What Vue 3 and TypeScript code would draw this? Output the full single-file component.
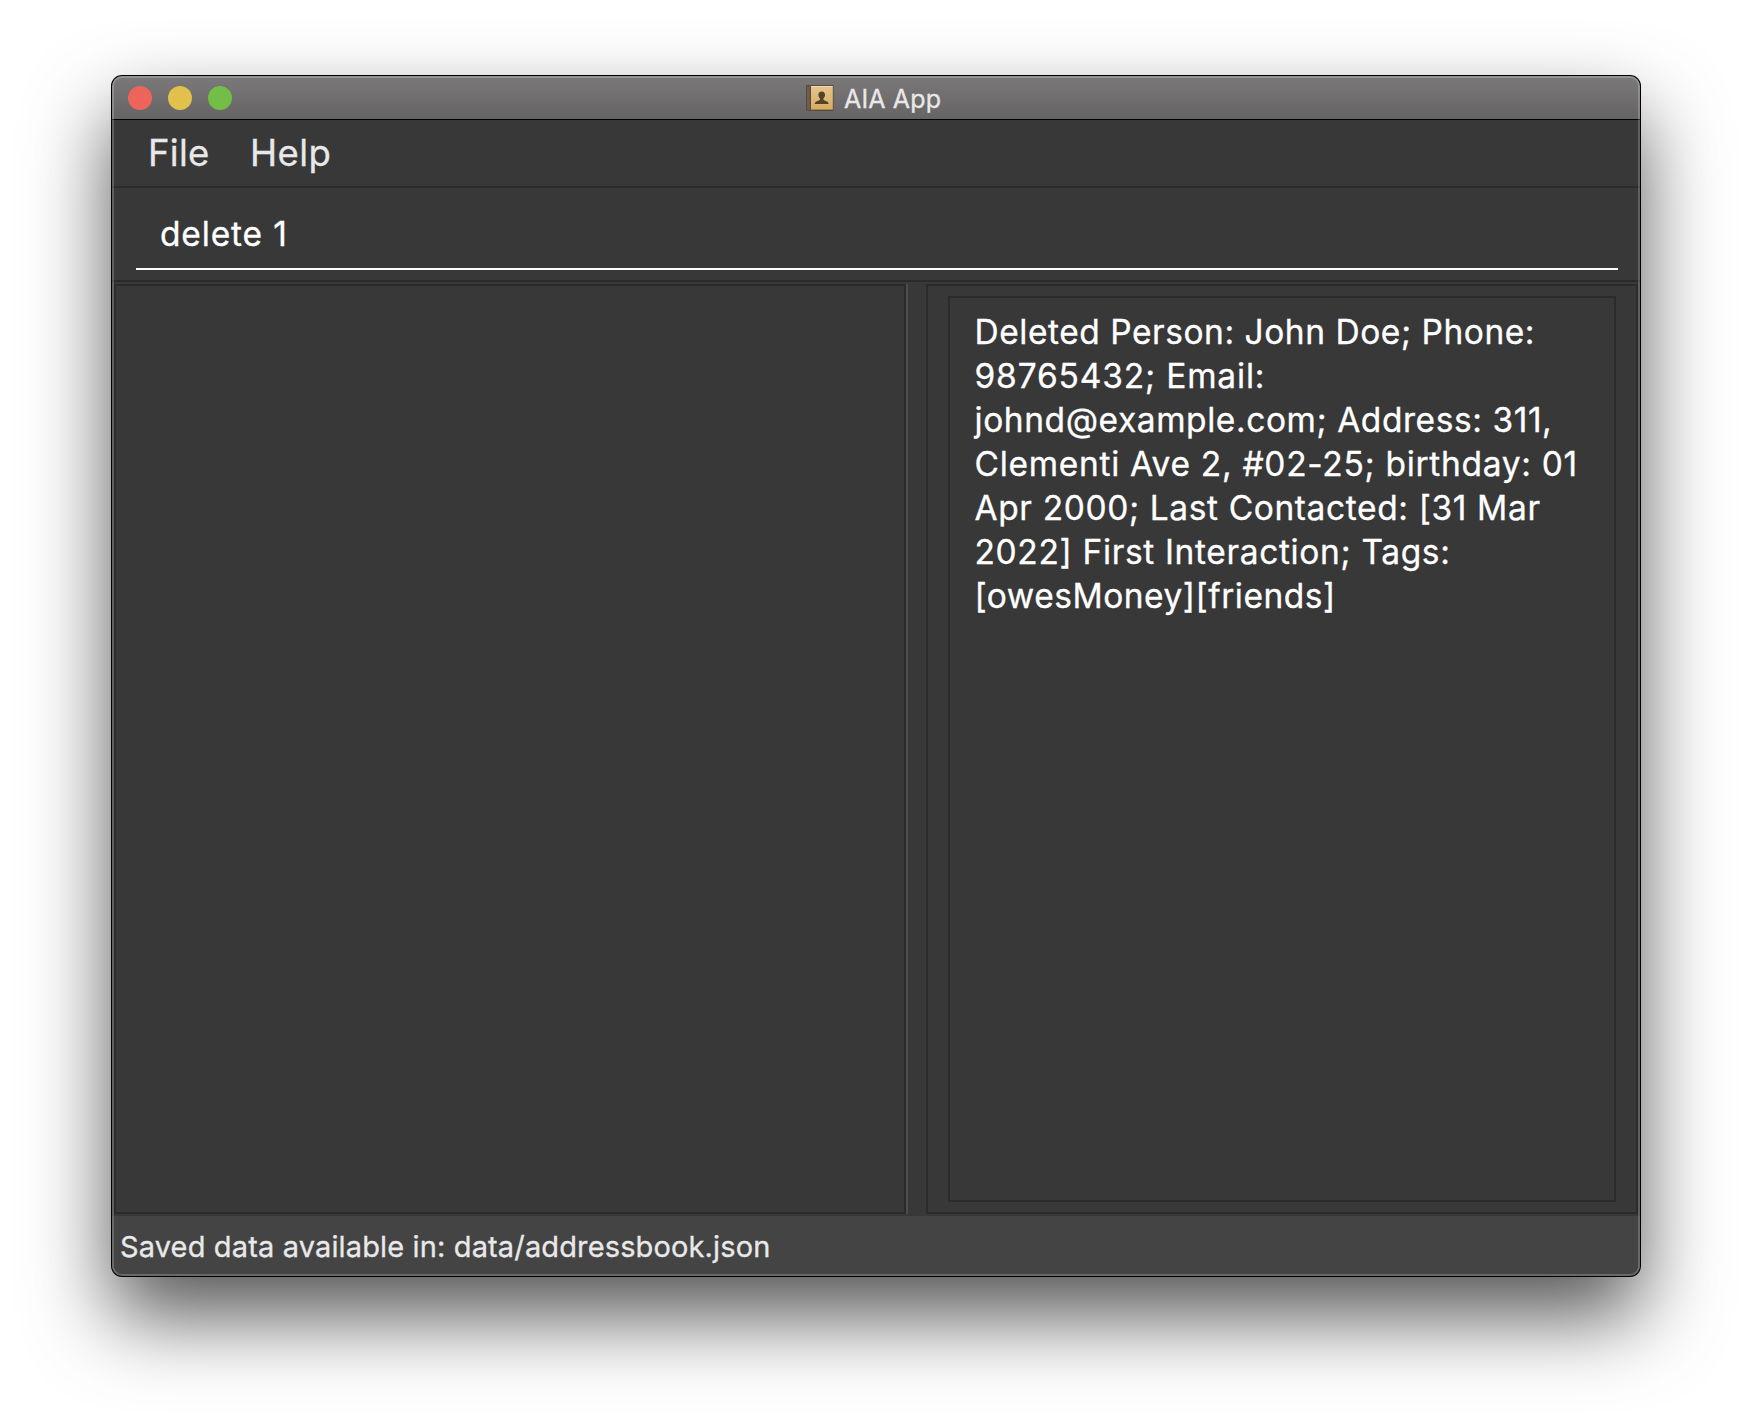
<script setup lang="ts">
interface Line {
  text: string
  spacing: number
}

const title = 'AIA App'
const command = 'delete 1'
const result: Line[] = [
  { text: 'Deleted Person: John Doe; Phone:', spacing: 0.54 },
  { text: '98765432; Email:', spacing: 0.83 },
  { text: 'johnd@example.com; Address: 311,', spacing: 0.57 },
  { text: 'Clementi Ave 2, #02-25; birthday: 01', spacing: 0.7 },
  { text: 'Apr 2000; Last Contacted: [31 Mar', spacing: 0.62 },
  { text: '2022] First Interaction; Tags:', spacing: 0.65 },
  { text: '[owesMoney][friends]', spacing: 0.51 },
]
const status = 'Saved data available in: data/addressbook.json'
</script>

<template>
  <main class="desktop">
    <section class="window">
      <header class="titlebar">
        <div class="lights">
          <i class="light close"></i>
          <i class="light minimise"></i>
          <i class="light zoom"></i>
        </div>
        <svg class="book" width="28" height="26" viewBox="0 0 28 26">
          <defs>
            <linearGradient id="cover" x1="0" y1="0" x2="0" y2="1">
              <stop offset="0" stop-color="#e6c58c" />
              <stop offset="1" stop-color="#d9ab62" />
            </linearGradient>
          </defs>
          <rect x="0" y="0" width="27.5" height="26" rx="1.2" fill="#5a4a3c" />
          <rect x="1" y="1" width="3" height="24" fill="#6d5b50" />
          <rect x="5" y="1" width="21.8" height="23.6" fill="url(#cover)" />
          <path d="M5 1.5H26.5" stroke="#f3deb4" stroke-width="1" />
          <path
            d="M15.7 6.4c-2.100 0-3.300 1.500-3.300 3.400 0 1.600.6 2.900 1.600 3.800.2 1.300-.3 1.700-1.700 2.200-2 .7-3.400 1.100-3.600 3.200h14c-.2-2.100-1.600-2.500-3.600-3.200-1.400-.5-1.900-.9-1.700-2.200 1-.9 1.600-2.200 1.600-3.800 0-1.900-1.200-3.400-3.300-3.400z"
            fill="#54432b"
          />
        </svg>
        <span class="title">{{ title }}</span>
      </header>

      <nav class="menu">
        <span class="file">File</span>
        <span class="help">Help</span>
      </nav>

      <div class="command">
        <div class="field">{{ command }}</div>
      </div>

      <div class="split">
        <div class="pane list"></div>
        <div class="divider"></div>
        <div class="pane detail">
          <div class="output">
            <div
              v-for="line in result"
              :key="line.text"
              class="line"
              :style="{ letterSpacing: line.spacing + 'px' }"
            >{{ line.text }}</div>
          </div>
        </div>
      </div>

      <footer class="status">{{ status }}</footer>
    </section>
  </main>
</template>

<style>
html,
body {
  background: #fff;
}
</style>

<style scoped>
.desktop {
  box-sizing: border-box;
  width: 1752px;
  height: 1424px;
  padding: 76px 112px 0;
  overflow: hidden;
  background: #fff;
  font-family: Inter, 'Liberation Sans', sans-serif;
  -webkit-text-stroke: 0.3px currentColor;
}

.window {
  position: relative;
  display: flex;
  flex-direction: column;
  width: 1528px;
  height: 1200px;
  overflow: hidden;
  border-radius: 10px;
  background: #383838;
  box-shadow: 0 0 0 1px #000, 0 40px 82px rgba(0, 0, 0, 0.67);
}

/* translucent rim over all window content */
.window::after {
  content: '';
  position: absolute;
  inset: 0;
  border-radius: 10px;
  box-shadow: inset 0 0 0 2px rgba(255, 255, 255, 0.2);
  pointer-events: none;
}

.titlebar {
  box-sizing: border-box;
  display: grid;
  grid-template-columns: 694px 28px auto;
  flex: none;
  height: 44px;
  border-bottom: 1px solid #000;
  background: linear-gradient(#7b797a, #656364);
}

.lights {
  display: flex;
  gap: 16px;
  padding: 10px 0 0 16px;
}

.light {
  width: 24px;
  height: 24px;
  border-radius: 50%;
}

.close {
  background: #ed655a;
}

.minimise {
  background: #e1c04c;
}

.zoom {
  background: #72be47;
}

.book {
  margin-top: 9px;
}

.title {
  padding: 3px 0 0 10px;
  color: #e9e8e8;
  font-size: 25px;
  line-height: 40px;
  letter-spacing: 0.15px;
}

.menu {
  display: flex;
  flex: none;
  gap: 41px;
  height: 66px;
  padding-left: 36px;
  border-bottom: 2px solid #2b2b2b;
  color: #e8e8e8;
  font-size: 36.5px;
  line-height: 66px;
}

.file {
  width: 61px;
  letter-spacing: 0.25px;
}

.help {
  letter-spacing: 0.4px;
}

.command {
  flex: none;
  height: 92px;
  padding: 0 22px 0 24px;
  border-bottom: 2px solid #2b2b2b;
}

.field {
  height: 68px;
  padding: 12px 0 0 24px;
  border-bottom: 2px solid #fff;
  color: #fff;
  font-size: 33.5px;
  line-height: 68px;
  letter-spacing: 0.85px;
}

.split {
  display: flex;
  flex: none;
  height: 930px;
  padding: 2px;
}

.pane {
  box-sizing: border-box;
  border: 2px solid #2b2b2b;
}

.list {
  width: 792px;
}

.divider {
  box-sizing: border-box;
  width: 20px;
  border-left: 2px solid #4d4d4d;
}

.detail {
  flex: 1;
  padding: 10px 20px;
}

.output {
  box-sizing: border-box;
  height: 906px;
  padding: 12px 0 0 24.5px;
  border: 2px solid #2b2b2b;
}

.line {
  color: #fff;
  font-size: 33.5px;
  line-height: 44px;
  white-space: nowrap;
}

.status {
  flex: 1;
  padding: 2px 0 0 8px;
  background: #444;
  color: #e9e9e9;
  font-size: 29px;
  line-height: 58px;
  letter-spacing: 0.14px;
}
</style>
